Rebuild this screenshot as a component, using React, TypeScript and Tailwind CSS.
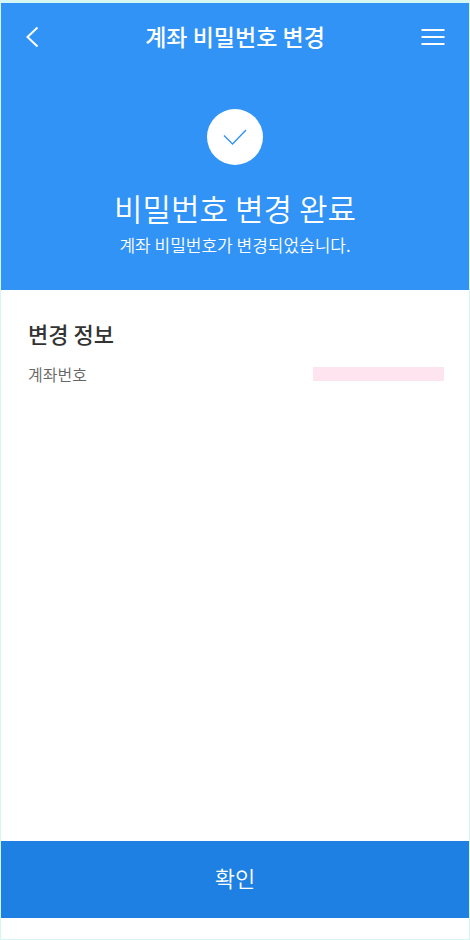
// @ts-ignore
import React from "react";

export default function App() {
  return (
    <div className="flex min-h-screen flex-col border border-t-3 border-[#d5f6f2] bg-white font-['Noto_Sans_CJK_KR',sans-serif]">
      <div className="bg-[#3093f5] text-white">
        {renderHeader()}
        {renderResult()}
      </div>
      <main className="flex-1 pt-[27px] pr-[25px] pl-[27px]">
        {renderChangeInfo()}
      </main>
      <footer className="pb-[21px]">
        <button
          type="button"
          className="h-[77px] w-full cursor-pointer bg-[#1d80e2] pb-1 text-[22px] font-[350] text-white"
        >
          확인
        </button>
      </footer>
    </div>
  );

  function renderHeader() {
    return (
      <header className="flex h-[68px] items-center justify-between px-6">
        <button type="button" aria-label="이전" className="cursor-pointer">
          <svg
            className="h-6 w-6"
            viewBox="0 0 24 24"
            fill="none"
            stroke="currentColor"
            strokeWidth="2"
          >
            <path d="M12.5 2.5L2.5 12L12.5 21.5" />
          </svg>
        </button>
        <h1 className="pb-[2px] text-[23px] leading-8 font-medium">
          계좌 비밀번호 변경
        </h1>
        <button type="button" aria-label="메뉴" className="cursor-pointer">
          <svg
            className="h-6 w-6"
            viewBox="0 0 24 24"
            fill="none"
            stroke="currentColor"
            strokeWidth="2"
          >
            <path d="M0.5 5H23.5M0.5 12H23.5M0.5 19H23.5" />
          </svg>
        </button>
      </header>
    );
  }

  function renderResult() {
    return (
      <section className="flex flex-col items-center pt-[38px] pb-[33px]">
        <div className="flex h-14 w-14 items-center justify-center rounded-full bg-white text-[#3093f5]">
          <svg
            className="h-6 w-6"
            viewBox="0 0 24 24"
            fill="none"
            stroke="currentColor"
            strokeWidth="1.4"
          >
            <path d="M1 10.5L9.5 19L23 5" />
          </svg>
        </div>
        <h2 className="mt-[23px] text-[31px] leading-10 font-[350]">
          비밀번호 변경 완료
        </h2>
        <p className="mt-[5px] text-[17px] leading-6 font-[350]">
          계좌 비밀번호가 변경되었습니다.
        </p>
      </section>
    );
  }

  function renderChangeInfo() {
    return (
      <section>
        <h3 className="text-[22px] leading-8 font-medium text-[#333]">
          변경 정보
        </h3>
        <dl className="mt-[13px] flex items-center justify-between">
          <dt className="text-base leading-6 font-[350] text-[#666]">
            계좌번호
          </dt>
          <dd className="h-[14px] w-[131px] bg-[#fde4ee]" />
        </dl>
      </section>
    );
  }
}
